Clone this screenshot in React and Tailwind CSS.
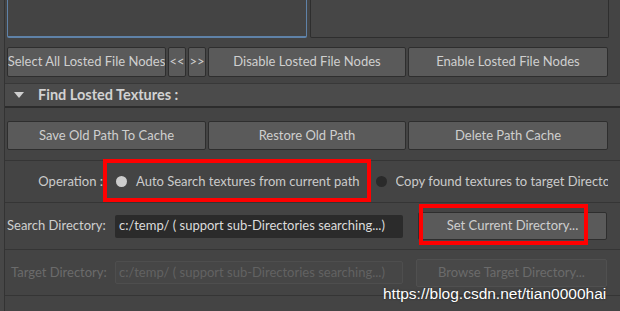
import React from "react";

const Btn = ({ children, className = "" }) => (
  <div
    className={`flex shrink-0 items-center justify-center rounded-[2px] border border-[#2e2e2e] bg-[#5a5a5a] text-[13px] text-[#cfcfcf] whitespace-nowrap overflow-hidden ${className}`}
  >
    {children}
  </div>
);

const Radio = ({ on }) => (
  <span
    className={`inline-block h-[11px] w-[11px] shrink-0 rounded-full ${
      on ? "bg-[#cdcdcd]" : "bg-[#2a2a2a]"
    }`}
  />
);

export default function App() {
  return (
    <div
      className="relative flex h-[311px] w-[620px] overflow-hidden bg-[#444444]"
      style={{ fontFamily: 'Lato, "Liberation Sans", sans-serif' }}
    >
      <div className="w-[4px] shrink-0 bg-[#474747]" />
      <div className="flex min-w-0 flex-1 flex-col border-l border-[#333333]">
        {/* list boxes */}
        <div className="flex gap-[3px] pl-[2px] pr-[11px]">
          <div className="h-[38px] w-[300px] shrink-0 rounded-b-[2px] border-x border-b-2 border-[#5f82a8] bg-[#444444]" />
          <div className="h-[38px] flex-1 rounded-b-[2px] border-x border-b border-[#2e2e2e] bg-[#464646]" />
        </div>

        {/* file node buttons */}
        <div className="mt-[9px] flex h-[30px] gap-[2px] pl-[2px] pr-[12px]">
          <Btn className="w-[159px]">Select All Losted File Nodes</Btn>
          <Btn className="w-[18px] text-[12px]">&lt;&lt;</Btn>
          <Btn className="w-[18px] text-[12px]">&gt;&gt;</Btn>
          <Btn className="w-[198px]">Disable Losted File Nodes</Btn>
          <Btn className="flex-1">Enable Losted File Nodes</Btn>
        </div>

        {/* section header */}
        <div className="mt-[6px] border-t border-[#383838]" />
        <div className="flex h-[24px] items-center border-b-2 border-[#2c2c2c] bg-[#4b4b4b] pl-[9px]">
          <svg width="10" height="7" viewBox="0 0 10 7">
            <path d="M0 0 H10 L5 6 Z" fill="#cfcfcf" />
          </svg>
          <span className="ml-[14px] text-[14.5px] font-bold text-[#d2d2d2]">
            Find Losted Textures :
          </span>
        </div>

        {/* cache buttons */}
        <div className="mt-[13px] flex h-[29px] gap-[2px] pl-[2px] pr-[12px]">
          <Btn className="w-[199px]">Save Old Path To Cache</Btn>
          <Btn className="w-[198px]">Restore Old Path</Btn>
          <Btn className="flex-1">Delete Path Cache</Btn>
        </div>

        {/* operation */}
        <div className="mt-[10px] flex h-[43px] items-center border-y border-[#353535] pr-[12px] text-[13px] text-[#cbcbcb] whitespace-nowrap">
          <span className="w-[98px] shrink-0 text-right">Operation :</span>
          <span className="ml-[13px] flex shrink-0 items-center">
            <Radio on />
          </span>
          <span className="ml-[9px] shrink-0">Auto Search textures from current path</span>
          <span className="ml-[16px] flex shrink-0 items-center">
            <Radio />
          </span>
          <span className="ml-[9px] min-w-0 overflow-hidden">Copy found textures to target Directory</span>
        </div>

        {/* search directory */}
        <div className="flex h-[47px] items-center border-b border-[#353535] text-[13px] whitespace-nowrap">
          <span className="ml-[2px] w-[104px] shrink-0 text-[#cfcfcf]">Search Directory:</span>
          <div className="ml-[4px] flex h-[23px] w-[288px] shrink-0 items-center overflow-hidden rounded-[2px] bg-[#2b2b2b] pl-[4px] text-[#dcdcdc]">
            c:/temp/ ( support sub-Directories searching...)
          </div>
          <Btn className="ml-[15px] h-[28px] w-[189px]">Set Current Directory...</Btn>
        </div>

        {/* target directory (disabled) */}
        <div className="flex h-[46px] items-center border-b border-[#353535] text-[13px] whitespace-nowrap">
          <span className="ml-[6px] w-[100px] shrink-0 text-[#6b6b6b]">Target Directory:</span>
          <div className="ml-[4px] flex h-[23px] w-[288px] shrink-0 items-center overflow-hidden rounded-[2px] border border-[#4e4e4e] bg-[#464646] pl-[3px] text-[#626262]">
            c:/temp/ ( support sub-Directories searching...)
          </div>
          <div className="ml-[13px] flex h-[28px] w-[191px] shrink-0 items-center justify-center rounded-[2px] border border-[#505050] bg-[#484848] text-[#6b6b6b]">
            Browse Target Directory...
          </div>
        </div>
      </div>

      {/* annotation boxes */}
      <div className="pointer-events-none absolute left-[103px] top-[159px] h-[43px] w-[268px] border-[4px] border-[#ff0000]" />
      <div className="pointer-events-none absolute left-[419px] top-[204px] h-[41px] w-[169px] border-[4px] border-[#ff0000]" />

      {/* watermark */}
      <div
        className="pointer-events-none absolute left-[383px] top-[282px] text-[15.5px] text-white"
        style={{ fontFamily: '"Liberation Sans", Arial, sans-serif', textShadow: "0 0 2px rgba(0,0,0,0.6)" }}
      >
        https://blog.csdn.net/tian0000hai
      </div>
    </div>
  );
}
